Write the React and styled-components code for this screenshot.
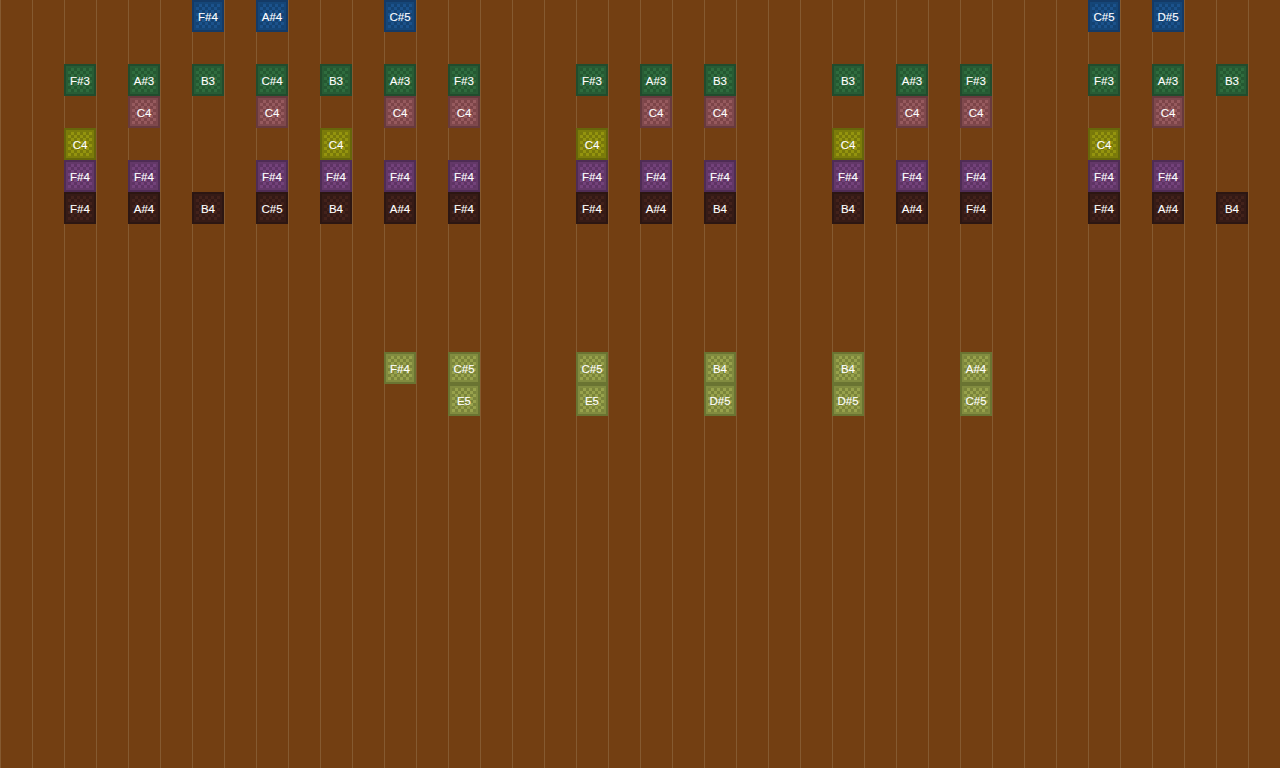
import styled, { createGlobalStyle } from "styled-components";

const GlobalStyle = createGlobalStyle`
  html, body {
    margin: 0;
    padding: 0;
    height: 100%;
    overflow: hidden;
    background: #733f12;
  }
`;

const palette = {
  blue: { edge: "#143a66", ring: "#154678", dark: "#134272", light: "#1b528c" },
  green: { edge: "#214c2d", ring: "#285c35", dark: "#245831", light: "#2f6c3e" },
  pink: { edge: "#683a3d", ring: "#7f494d", dark: "#7c4448", light: "#965a5e" },
  yellow: { edge: "#66660a", ring: "#7c7c0a", dark: "#78780a", light: "#94940e" },
  purple: { edge: "#4f2c55", ring: "#633868", dark: "#5e3364", light: "#73427a" },
  dark: { edge: "#2c1612", ring: "#361b16", dark: "#331915", light: "#43221b" },
  olive: { edge: "#6a7432", ring: "#828c40", dark: "#7a843a", light: "#98a24c" },
};

const lanes = [
  { row: 0, color: "blue", notes: [[6, "F#4"], [8, "A#4"], [12, "C#5"], [34, "C#5"], [36, "D#5"]] },
  {
    row: 2,
    color: "green",
    notes: [
      [2, "F#3"], [4, "A#3"], [6, "B3"], [8, "C#4"], [10, "B3"], [12, "A#3"], [14, "F#3"], [18, "F#3"],
      [20, "A#3"], [22, "B3"], [26, "B3"], [28, "A#3"], [30, "F#3"], [34, "F#3"], [36, "A#3"], [38, "B3"],
    ],
  },
  {
    row: 3,
    color: "pink",
    notes: [[4, "C4"], [8, "C4"], [12, "C4"], [14, "C4"], [20, "C4"], [22, "C4"], [28, "C4"], [30, "C4"], [36, "C4"]],
  },
  { row: 4, color: "yellow", notes: [[2, "C4"], [10, "C4"], [18, "C4"], [26, "C4"], [34, "C4"]] },
  {
    row: 5,
    color: "purple",
    notes: [2, 4, 8, 10, 12, 14, 18, 20, 22, 26, 28, 30, 34, 36].map((col) => [col, "F#4"]),
  },
  {
    row: 6,
    color: "dark",
    notes: [
      [2, "F#4"], [4, "A#4"], [6, "B4"], [8, "C#5"], [10, "B4"], [12, "A#4"], [14, "F#4"], [18, "F#4"],
      [20, "A#4"], [22, "B4"], [26, "B4"], [28, "A#4"], [30, "F#4"], [34, "F#4"], [36, "A#4"], [38, "B4"],
    ],
  },
  { row: 11, color: "olive", notes: [[12, "F#4"], [14, "C#5"], [18, "C#5"], [22, "B4"], [26, "B4"], [30, "A#4"]] },
  { row: 12, color: "olive", notes: [[14, "E5"], [18, "E5"], [22, "D#5"], [26, "D#5"], [30, "C#5"]] },
];

const App = () => {
  return (
    <>
      <GlobalStyle />
      <Board>
        {lanes.map((lane) =>
          lane.notes.map(([col, label]) => (
            <Note key={`${lane.row}-${col}`} $col={col} $row={lane.row} $color={lane.color}>
              {label}
            </Note>
          ))
        )}
      </Board>
    </>
  );
};

export default App;

const Board = styled.div`
  width: 1280px;
  height: 768px;
  display: grid;
  grid-template-columns: repeat(40, 32px);
  grid-template-rows: repeat(24, 32px);
  background-color: #733f12;
  background-image: linear-gradient(to right, #855a30 1px, transparent 1px);
  background-size: 32px 32px;
`;

const Note = styled.div`
  grid-column: ${(p) => p.$col + 1};
  grid-row: ${(p) => p.$row + 1};
  box-sizing: border-box;
  display: flex;
  align-items: center;
  justify-content: center;
  border: 2px solid ${(p) => palette[p.$color].edge};
  box-shadow: inset 0 0 0 2px ${(p) => palette[p.$color].ring};
  padding-top: 2px;
  color: #fff;
  font-family: "Liberation Sans", Arial, sans-serif;
  font-size: 11.5px;
  -webkit-text-stroke: 0.1px #fff;
  background-color: ${(p) => palette[p.$color].dark};
  background-image: conic-gradient(
    ${(p) => palette[p.$color].light} 25%,
    ${(p) => palette[p.$color].dark} 0 50%,
    ${(p) => palette[p.$color].light} 0 75%,
    ${(p) => palette[p.$color].dark} 0
  );
  background-size: 6px 6px;
  background-position: 2px 2px;
  background-origin: padding-box;
`;
